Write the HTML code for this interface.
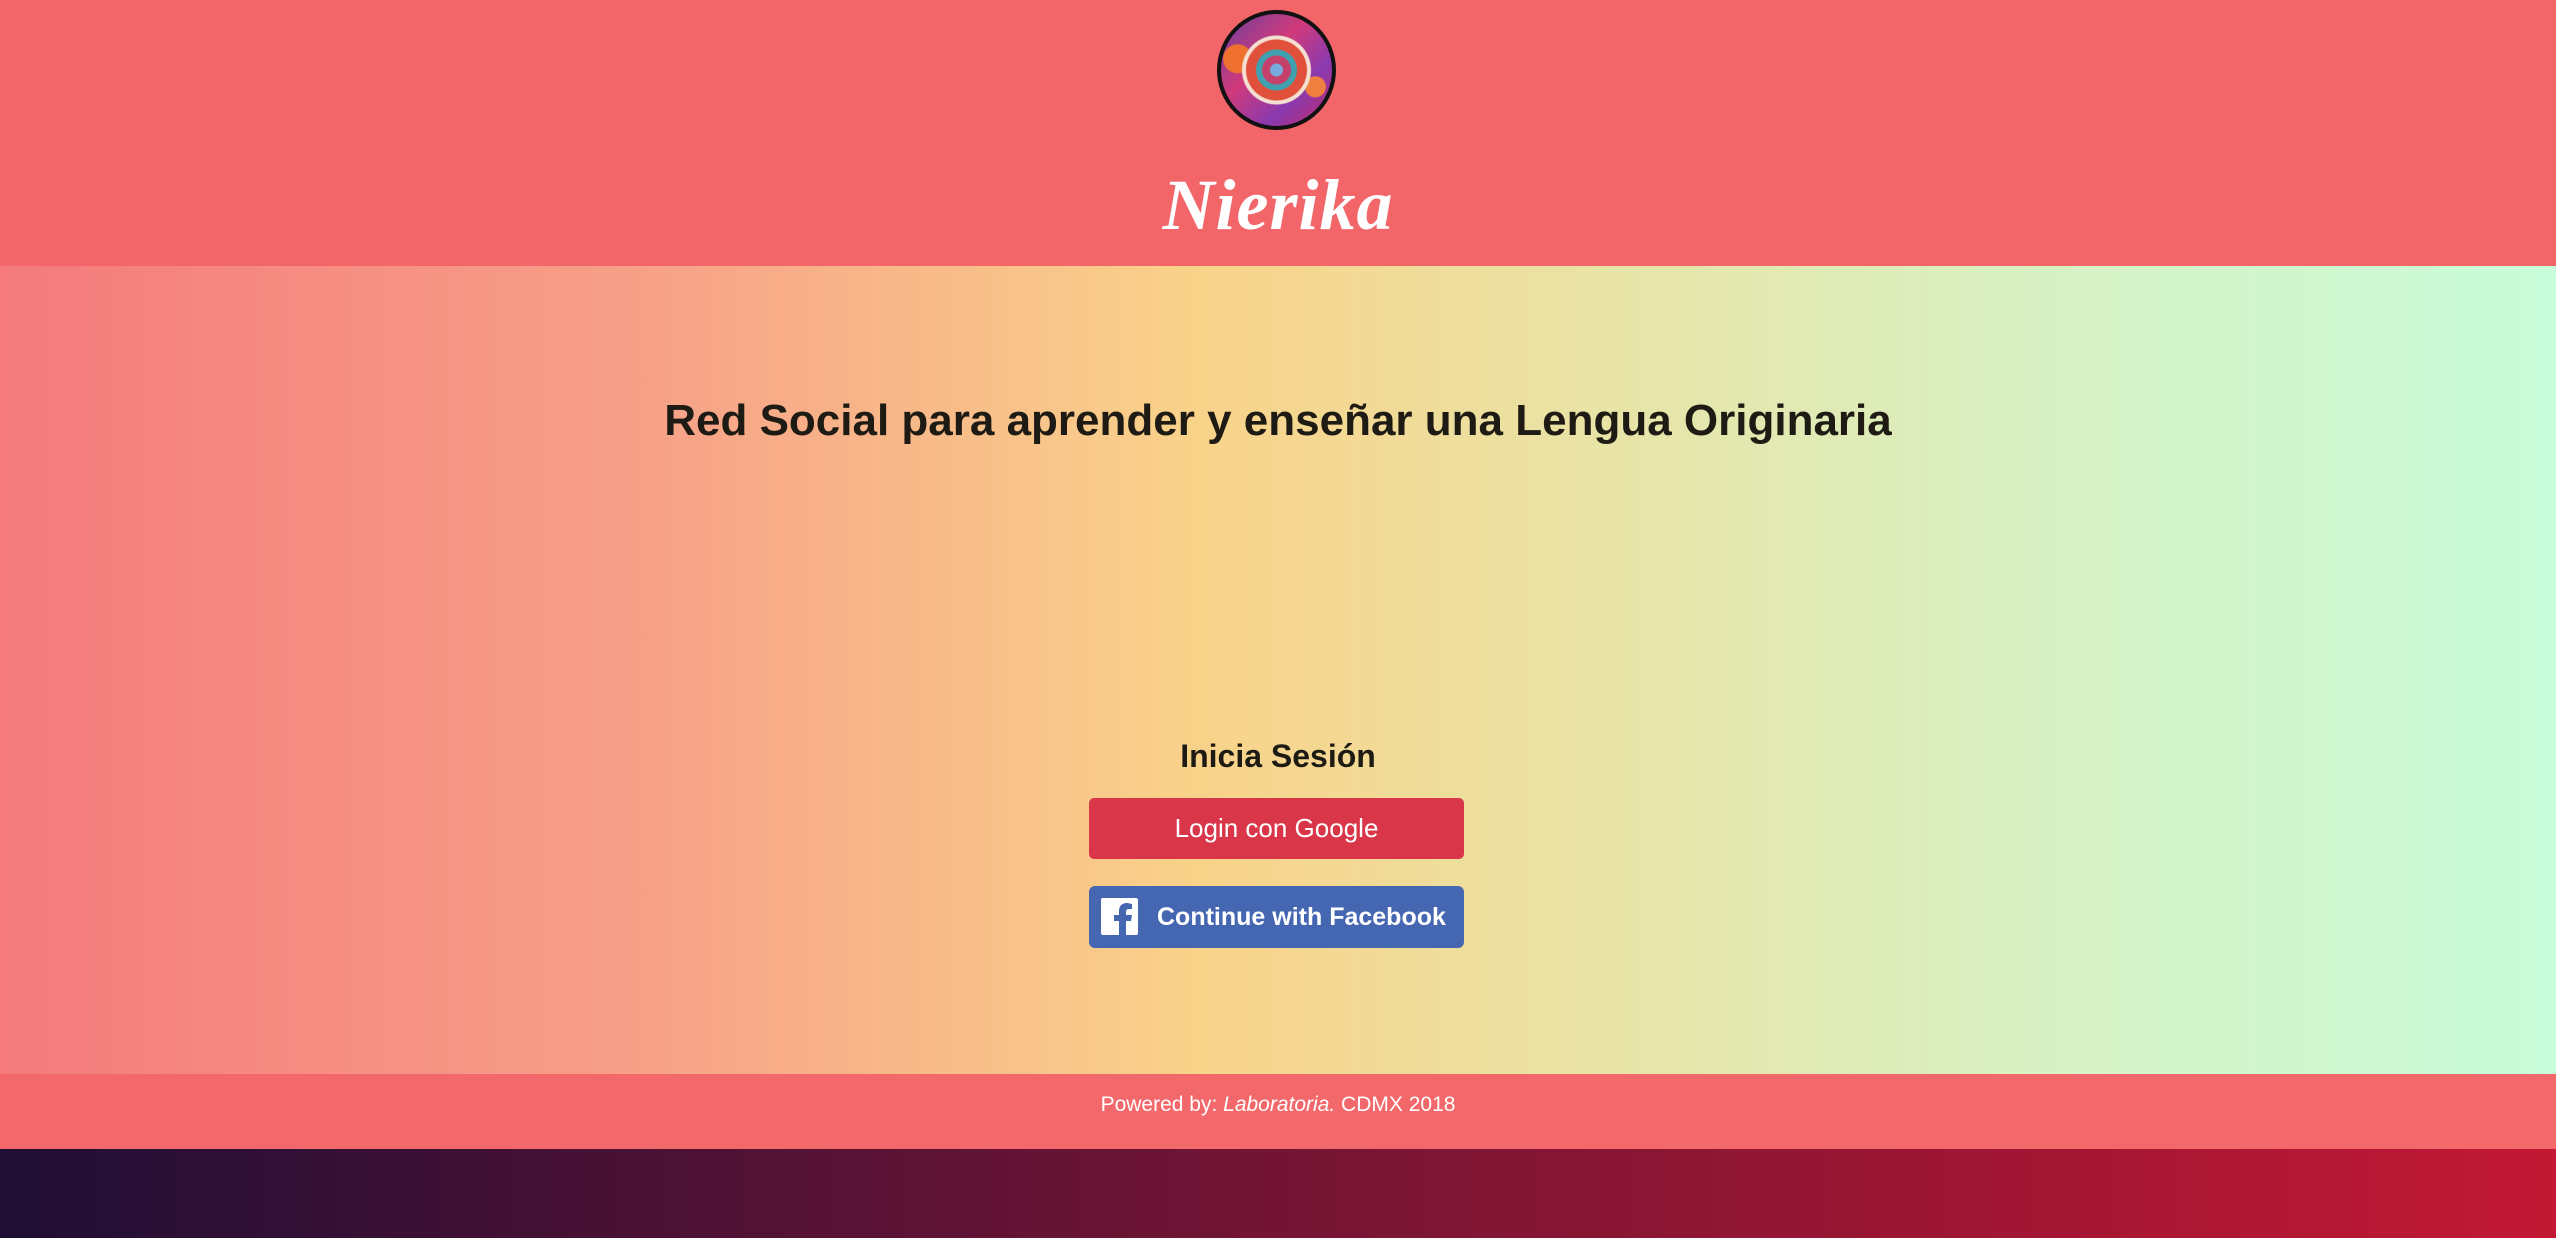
<!DOCTYPE html>
<html><head><meta charset="utf-8">
<style>
*{margin:0;padding:0;box-sizing:border-box}
html,body{width:2556px;height:1238px;overflow:hidden;font-family:"Liberation Sans",sans-serif}
.hdr{position:absolute;left:0;top:0;width:2556px;height:266px;background:#f2666a}
.logo{position:absolute;left:1217px;top:10px;width:119px;height:120px;border-radius:50%;border:4px solid #111;
background:
radial-gradient(circle at 50% 50%, #7ad 0 6px, #c5406a 7px 14px, #3fa0b0 15px 20px, #e0503a 21px 30px, #f4e0d0 31px 34px, transparent 35px),
radial-gradient(circle at 15% 40%, #f07030 0 14px, transparent 15px),
radial-gradient(circle at 85% 65%, #f08040 0 10px, transparent 11px),
linear-gradient(135deg,#6a3fa0,#d03a7a 40%,#8a3ab0 70%,#c02a6a)}
.title{position:absolute;left:0;width:2556px;top:164px;text-align:center;color:#fff;font-family:"Liberation Serif",serif;font-weight:bold;font-style:italic;font-size:72px;letter-spacing:1px}
.main{position:absolute;left:0;top:266px;width:2556px;height:808px;background:linear-gradient(90deg,#f47a7c 0%,#f7a088 25%,#f9d38a 47%,#e9e3a5 62%,#d8f1c4 80%,#c8fcda 100%)}
h1{position:absolute;left:0;width:2556px;top:396px;text-align:center;font-size:44px;font-weight:bold;color:#1e1a14}
h2{position:absolute;left:0;width:2556px;top:738px;text-align:center;font-size:32px;font-weight:bold;color:#1e1a14}
.g{position:absolute;left:1089px;top:798px;width:375px;height:61px;border-radius:5px;background:#da3649;color:#fff;font-size:26px;text-align:center;line-height:61px}
.f{position:absolute;left:1089px;top:886px;width:375px;height:62px;border-radius:6px;background:#4567b2;color:#fff;font-size:25px;font-weight:bold;line-height:62px}
.f span{position:absolute;left:68px}
.f svg{position:absolute;left:12px;top:12px}
.ft{position:absolute;left:0;top:1074px;width:2556px;height:75px;background:#f2686b;color:#fff;text-align:center;font-size:21px;line-height:62px}
.bot{position:absolute;left:0;top:1149px;width:2556px;height:89px;background:linear-gradient(90deg,#1f0e35,#6c1434 45%,#c21834)}
</style></head><body>
<div class="hdr"><div class="logo"></div><div class="title">Nierika</div></div>
<div class="main"></div>
<h1>Red Social para aprender y enseñar una Lengua Originaria</h1>
<h2>Inicia Sesión</h2>
<div class="g">Login con Google</div>
<div class="f"><svg width="37" height="37" viewBox="0 0 37 37"><rect width="37" height="37" rx="2" fill="#fff"/><path d="M25 37V23h5l1-6h-6v-3c0-2 1-3 3-3h3V6c-1 0-3-1-5-1-5 0-8 3-8 8v4h-5v6h5v14z" fill="#4567b2"/></svg><span>Continue with Facebook</span></div>
<div class="ft">Powered by: <i>Laboratoria.</i> CDMX 2018</div>
<div class="bot"></div>
</body></html>
